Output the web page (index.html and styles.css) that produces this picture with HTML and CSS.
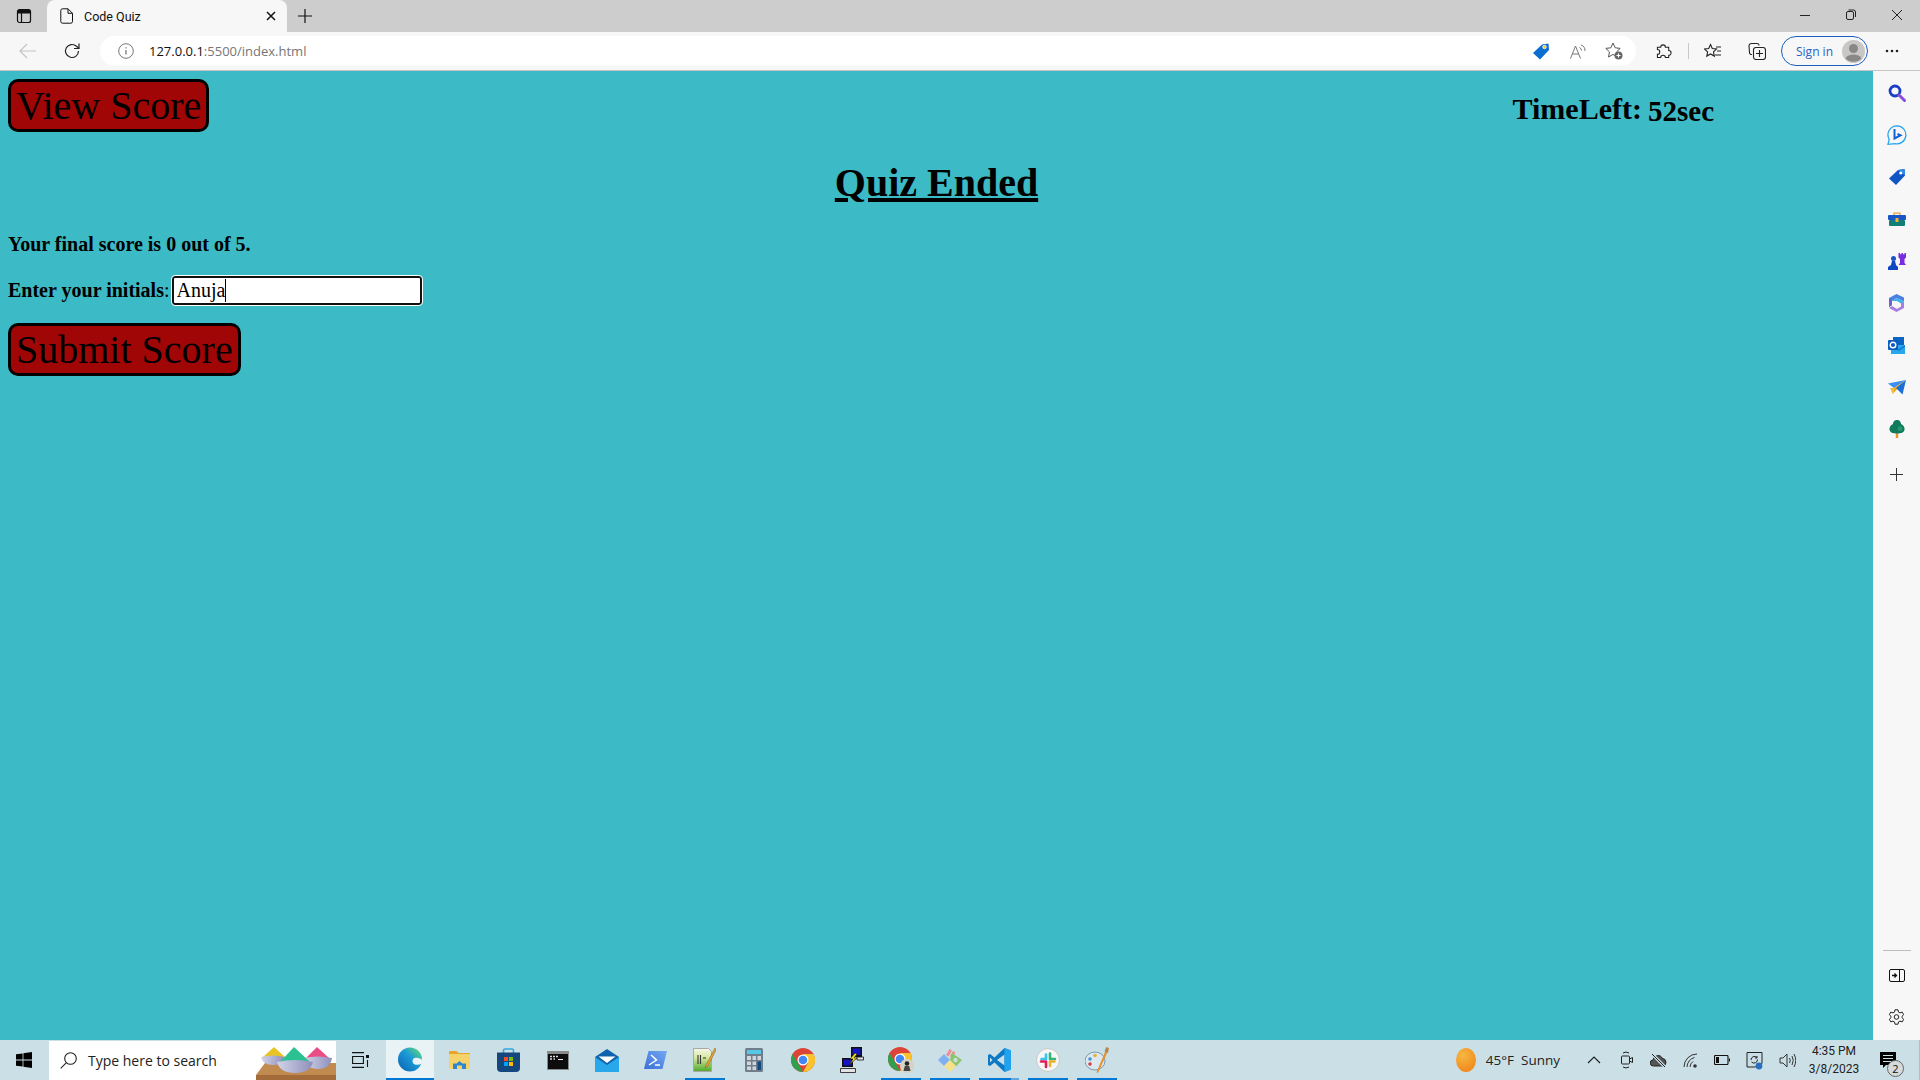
FILE: index.html
```html
<!DOCTYPE html>
<html lang="en">
<head>
  <meta charset="UTF-8">
  <title>Code Quiz</title>
  <link rel="stylesheet" href="styles.css">
</head>
<body>

<!-- tab strip -->
<div class="tabstrip">
  <div class="tab-side">
    <svg width="16" height="16" viewBox="0 0 16 16" fill="none" stroke="#111" stroke-width="1.2"><rect x="1.5" y="1.5" width="13" height="13" rx="2"/><path d="M1.5 5h13M5.5 5v9.5"/><path d="M2 2h12v3H2z" fill="#111" stroke="none"/></svg>
  </div>
  <div class="tab">
    <svg width="14" height="16" viewBox="0 0 14 16" fill="none" stroke="#111" stroke-width="1"><path d="M2.500.8h5.500l4.500 4.500v8.200a1.700 1.700 0 0 1-1.700 1.700H2.500a1.700 1.700 0 0 1-1.700-1.700V2.500A1.700 1.700 0 0 1 2.500.8z"/><path d="M8 .8v4.500h4.500"/></svg>
    <span class="tab-title">Code Quiz</span>
    <svg class="tab-close" width="10" height="10" viewBox="0 0 10 10" stroke="#111" stroke-width="1.500"><path d="M1 1l8 8M9 1l-8 8"/></svg>
  </div>
  <div class="tab-new">
    <svg width="14" height="14" viewBox="0 0 14 14" stroke="#111" stroke-width="1.200"><path d="M7 0v14M0 7h14"/></svg>
  </div>
  <div class="win-btns">
    <svg width="46" height="12" viewBox="0 0 46 12" stroke="#222"><path d="M18 6.500h10"/></svg>
    <svg width="46" height="12" viewBox="0 0 46 12" fill="none" stroke="#222"><rect x="18.500" y="2.500" width="7" height="8" rx="1.500"/><path d="M20.500 1h5a2 2 0 0 1 2 2v5"/></svg>
    <svg width="46" height="12" viewBox="0 0 46 12" stroke="#222"><path d="M18 1l10 10M28 1L18 11"/></svg>
  </div>
</div>

<!-- address bar row -->
<div class="toolbar">
  <svg class="tb-back" width="18" height="16" viewBox="0 0 18 16" fill="none" stroke="#c4c4c4" stroke-width="1.200"><path d="M17 8H1M8 1L1 8l7 7"/></svg>
  <svg class="tb-reload" width="18" height="18" viewBox="0 0 18 18" fill="none" stroke="#222" stroke-width="1.200"><path d="M15.500 9a6.500 6.500 0 1 1-2-4.700L16 6.500"/><path d="M16 1.500v5h-5"/></svg>
  <div class="addressbar">
    <svg width="16" height="16" viewBox="0 0 16 16" fill="none" stroke="#777" stroke-width="1"><circle cx="8" cy="8" r="7.300"/><path d="M8 7v4.500" stroke-width="1.300"/><path d="M8 4.200v1.300" stroke-width="1.300"/></svg>
    <span class="url"><span class="url-host">127.0.0.1</span>:5500/index.html</span>
    <svg class="addr-tag" width="18" height="18" viewBox="0 0 18 18"><path d="M1 11L10 2.500 16.500 1.500 17 8l-9 9.500z" fill="#0b6fd1"/><circle cx="12.500" cy="5" r="1.800" fill="#ffc933" stroke="#fff" stroke-width=".7"/></svg>
    <svg class="addr-read" width="16" height="15" viewBox="0 0 16 15" fill="none" stroke="#777" stroke-width="1"><path d="M.5 14.500L5.500 2l5 12.500M2.300 10h6.400"/><path d="M9.500 3.500a3.500 3.500 0 0 1 2 3M11 1a6 6 0 0 1 4 6"/></svg>
    <svg class="addr-fav" width="20" height="20" viewBox="0 0 20 20"><path d="M9 2l2.200 4.800 5 .6-3.700 3.500 1 5-4.500-2.500L4.500 16l1-5L1.800 7.400l5-.6z" fill="none" stroke="#555" stroke-width="1"/><circle cx="14.500" cy="14.500" r="4" fill="#666"/><path d="M14.500 12.500v4M12.500 14.500h4" stroke="#fff" stroke-width="1"/></svg>
  </div>
  <svg class="tb-ext" width="16" height="16" viewBox="0 0 17 17" fill="none" stroke="#222" stroke-width="1.100"><path d="M1.500 4.500H5a2.500 2.500 0 1 1 5 0h3.500V8a2.500 2.500 0 1 1 0 5v2.500H10a2.500 2.500 0 1 0-5 0H1.500V12a2.500 2.500 0 1 0 0-5z"/></svg>
  <div class="tb-divider"></div>
  <svg class="tb-favs" width="18" height="16" viewBox="0 0 18 16" fill="none" stroke="#222" stroke-width="1.100"><path d="M6.500 1.500l1.800 4 4.200.5-3 2.900.8 4.200-3.800-2.100-3.700 2.100.8-4.200L.5 6l4.200-.5z"/><path d="M12 4h5M13 8h4M11 12h6"/></svg>
  <svg class="tb-coll" width="18" height="18" viewBox="0 0 18 18" fill="none" stroke="#222" stroke-width="1.100"><path d="M4 12.500A2 2 0 0 1 1.500 10.500L1 4a2.500 2.500 0 0 1 2.500-2.500L9 1.500a2 2 0 0 1 2 2"/><rect x="5.500" y="5.500" width="12" height="12" rx="2.500"/><path d="M11.500 8v7M8 11.500h7"/></svg>
  <div class="signin">
    <span>Sign in</span>
    <svg width="23" height="23" viewBox="0 0 23 23"><circle cx="11.500" cy="11.500" r="11.500" fill="#c9c7c5"/><circle cx="11.500" cy="8.500" r="4.500" fill="#8a8886"/><path d="M3.500 18.500c1.500-3 4.500-4 8-4s6.500 1 8 4a11.500 11.500 0 0 1-16 0z" fill="#8a8886"/></svg>
  </div>
  <svg class="tb-more" width="14" height="4" viewBox="0 0 14 4" fill="#222"><circle cx="2" cy="2" r="1.300"/><circle cx="7" cy="2" r="1.300"/><circle cx="12" cy="2" r="1.300"/></svg>
</div>

<div class="window-body">
  <!-- the quiz page -->
  <main class="page">
    <header class="page-head">
      <button class="btn" type="button">View Score</button>
      <div class="timer"><span>TimeLeft:</span> <span class="time-val">52sec</span></div>
    </header>
    <h1 class="quiz-title">Quiz Ended</h1>
    <p class="final-score">Your final score is 0 out of 5.</p>
    <div class="initials-row">
      <label class="initials-label" for="initials"><b>Enter your initials</b>:</label>
      <span class="input-wrap">
        <input id="initials" class="initials-input" type="text" value="Anuja">
        <span class="caret"></span>
      </span>
    </div>
    <button class="btn btn-submit" type="button">Submit Score</button>
  </main>

  <!-- edge sidebar -->
  <aside class="sidebar">
    <div class="side-icon"><svg width="18" height="18" viewBox="0 0 18 18" fill="none"><circle cx="7" cy="7" r="5" stroke="#1a3fc4" stroke-width="2.800"/><path d="M11 11l5.500 5.500" stroke="#8a4be0" stroke-width="3" stroke-linecap="round"/></svg></div>
    <div class="side-icon"><svg width="20" height="20" viewBox="0 0 20 20" fill="none"><path d="M10 .8a9 9 0 1 1-2 17.800L1 19.300l1.200-5A9 9 0 0 1 10 .8z" stroke="#2aa5f0" stroke-width="1.300"/><path d="M7.500 4v9.500l6-3.200-3-1.300" stroke="#1660d8" stroke-width="2"/></svg></div>
    <div class="side-icon"><svg width="18" height="18" viewBox="0 0 18 18"><path d="M1 10.500L10 2l6.500-1 .5 6.500-9 9.500z" fill="#0f55c4"/><path d="M10 2l6.500-1 .5 6.500z" fill="#2d88e6"/><circle cx="12.800" cy="5" r="1.600" fill="#fff"/></svg></div>
    <div class="side-icon"><svg width="18" height="14" viewBox="0 0 18 14"><path d="M6 3V1.200h6V3" fill="none" stroke="#e6a23c" stroke-width="1.300"/><rect y="3" width="18" height="5" rx="1" fill="#1a55c8"/><rect x="1" y="8" width="16" height="6" rx="1" fill="#0f7f78"/><rect x="7.500" y="6" width="3" height="4" fill="#f2b632"/></svg></div>
    <div class="side-icon"><svg width="18" height="18" viewBox="0 0 18 18"><path d="M10.500 1h1.500v1.300h1.500V1H15v1.300h1.500V1H18v4.500l-1.500 1.500v4l1.500 2H10.500l1.500-2V7l-1.500-1.500z" fill="#7a2ce0"/><circle cx="5.500" cy="6.500" r="2.500" fill="#1a55c8"/><path d="M4 9h3l1 4 2 2v3H0v-3l3-2z" fill="#0f48c4"/></svg></div>
    <div class="side-icon"><svg width="17" height="18" viewBox="0 0 17 18"><path d="M8.500 0L16 3.500v4L8.500 4 4 7v4L1 13V4z" fill="#4d7fe0"/><path d="M16 7.500V14l-7.500 4L1 14l3-2 5 3 4-2.500V9z" fill="#a77de0"/><path d="M4 7l4.500-3 7.500 3.500L13 9.500 9 7z" fill="#3ab3e8"/><path d="M1 4v9l3-2V7z" fill="#6f5fd8"/></svg></div>
    <div class="side-icon"><svg width="17" height="17" viewBox="0 0 17 17"><rect x="5" width="11" height="8" fill="#0a64c4"/><path d="M3 8h14v9H3z" fill="#28a8ea"/><path d="M5 8l6 4 6-4v2l-6 4-6-4z" fill="#0f7fd8"/><rect y="3" width="10" height="10" rx="1" fill="#0a5cc0"/><circle cx="5" cy="8" r="2.800" fill="none" stroke="#fff" stroke-width="1.400"/></svg></div>
    <div class="side-icon"><svg width="18" height="15" viewBox="0 0 18 15"><path d="M0 3.500L18 0 6 8z" fill="#3c8ff0"/><path d="M18 0L6 8l-1.500 6z" fill="#f2a516"/><path d="M18 0L8 8l6.500 6.500z" fill="#1a6fd8"/><path d="M2 8l3 6 1-6z" fill="#f0b840"/></svg></div>
    <div class="side-icon"><svg width="16" height="18" viewBox="0 0 16 18"><rect x="6.800" y="13" width="2.400" height="5" fill="#e6952a"/><path d="M8 0c3 0 4 2.500 4 4 2.500 1 4 3.500 3.500 6-.5 2.500-3 3.500-7.500 3.500S1 12.500.5 10C0 7.500 1.500 5 4 4c0-1.500 1-4 4-4z" fill="#107a5c"/><circle cx="11" cy="8.500" r="2.500" fill="#26966e"/></svg></div>
    <div class="side-icon side-plus"><svg width="13" height="13" viewBox="0 0 13 13" stroke="#333" stroke-width="1"><path d="M6.500 0v13M0 6.500h13"/></svg></div>
    <div class="side-bottom">
      <div class="side-sep"></div>
      <div class="side-foot"><svg width="16" height="13" viewBox="0 0 16 13" fill="none" stroke="#111" stroke-width="1"><rect x=".5" y=".5" width="15" height="12" rx="1.500"/><path d="M10.500.5v12"/><path d="M3 6.500h4M5.500 4.500l2 2-2 2" stroke-width="1.300"/></svg></div>
      <div class="side-foot"><svg width="17" height="17" viewBox="0 0 17 17" fill="none" stroke="#222" stroke-width="1"><path d="M7 .8h3l.5 2.300 1.500.8 2.200-.8 1.500 2.600-1.700 1.600v1.400l1.700 1.600-1.500 2.600-2.200-.8-1.500.8-.5 2.300H7l-.5-2.300-1.500-.8-2.200.8L1.300 10.300 3 8.700V7.300L1.300 5.700l1.500-2.600 2.200.8 1.500-.8z"/><circle cx="8.500" cy="8" r="2.300"/></svg></div>
    </div>
  </aside>
</div>

<!-- windows taskbar -->
<footer class="taskbar">
  <div class="start"><svg width="16" height="16" viewBox="0 0 16 16" fill="#000"><path d="M0 2.300L6.600 1.400v6.100H0zM7.400 1.300L16 0v7.500H7.400zM0 8.400h6.600v6.200L0 13.700zM7.400 8.400H16V16l-8.600-1.200z"/></svg></div>
  <div class="searchbox">
    <svg width="17" height="17" viewBox="0 0 17 17" fill="none" stroke="#222" stroke-width="1.100"><circle cx="10.500" cy="6.500" r="5.800"/><path d="M6.200 10.800L.7 16.300"/></svg>
    <span>Type here to search</span>
    <svg class="powder" width="80" height="39" viewBox="0 0 80 39">
      <defs>
        <linearGradient id="bowl" x1="0" y1="0" x2="1" y2="0"><stop offset="0" stop-color="#d2d3e8"/><stop offset="1" stop-color="#8d8fbc"/></linearGradient>
      </defs>
      <path d="M0 34l9-12h71v12z" fill="#c08a50"/>
      <path d="M0 34h80v5H0z" fill="#a26c3a"/>
      <path d="M7 16L18 6l11 10z" fill="#e8c422"/>
      <path d="M5 16q12-3 24 0-2 8-12 8T5 16z" fill="url(#bowl)"/>
      <path d="M50 17L61 6l12 11z" fill="#ea4d86"/>
      <path d="M48 17q14-3 28 0-2 11-14 11T48 17z" fill="url(#bowl)"/>
      <path d="M24 21L38 6l16 15z" fill="#2cc192"/>
      <path d="M21 21q18-4 36 0-3 11-18 11T21 21z" fill="url(#bowl)"/>
    </svg>
  </div>
  <div class="tb-slot"><svg width="17" height="16" viewBox="0 0 17 16" fill="none" stroke="#111" stroke-width="1.100"><path d="M0 .6h12M0 15.400h12"/><path d="M.6 4.500h10.800v7H.6z"/><rect x="14" y="3" width="3" height="3" fill="#111" stroke="none"/><path d="M15.500 8v7"/></svg></div>
  <div class="tb-slot tb-edge">
    <svg width="24" height="25" viewBox="0 0 24 25">
      <defs>
        <linearGradient id="edge" x1="0" y1="1" x2="1" y2="0"><stop offset="0" stop-color="#0d5fb0"/><stop offset=".55" stop-color="#1a9ad6"/><stop offset="1" stop-color="#6fe06a"/></linearGradient>
      </defs>
      <circle cx="12" cy="12.500" r="12" fill="url(#edge)"/>
      <path d="M25 14C23 11 19 10 16.500 11c-2.500 1-2.500 4.500-.5 6 2.500 1.500 6 1 9-1z" fill="#e9f3f6"/>
    </svg>
  </div>
  <div class="tb-slot"><svg width="21" height="18" viewBox="0 0 21 18"><path d="M0 1a1 1 0 0 1 1-1h6.500l2 2H21v3H0z" fill="#e6a526"/><rect y="3" width="21" height="15" rx="1" fill="#f6d36a"/><path d="M4 18v-5.500h3.500L10.500 10l3 2.500H17V18h-4v-3.500H8V18z" fill="#2f86d0"/></svg></div>
  <div class="tb-slot"><svg width="23" height="24" viewBox="0 0 23 24"><path d="M6.500 6V2.500A1.500 1.500 0 0 1 8 1h7a1.500 1.500 0 0 1 1.500 1.500V6" fill="none" stroke="#2fa8e0" stroke-width="1.600"/><path d="M0 4.500h23V20a4 4 0 0 1-4 4H4a4 4 0 0 1-4-4z" fill="#14477e"/><rect x="7" y="9" width="4" height="4" fill="#f25022"/><rect x="12" y="9" width="4" height="4" fill="#7fba00"/><rect x="7" y="14" width="4" height="4" fill="#00a4ef"/><rect x="12" y="14" width="4" height="4" fill="#ffb900"/></svg></div>
  <div class="tb-slot"><svg width="22" height="19" viewBox="0 0 22 19"><rect width="22" height="19" fill="#8a8a8a"/><rect x="1" y="3" width="20" height="15" fill="#0c0c0c"/><path d="M3 5.500h2M6 5.500h2M9 5.500h2M3 8h2M6.500 8h1.500" stroke="#ddd" stroke-width="1.300"/><path d="M11 8.500h5" stroke="#eee"/></svg></div>
  <div class="tb-slot"><svg width="24" height="23" viewBox="0 0 24 23"><path d="M12 0l12 8v15H0V8z" fill="#0f62ad"/><path d="M3.500 7.500h17L12 14z" fill="#fff"/><path d="M0 8l12 8 12-8v15H0z" fill="#28a8ea"/></svg></div>
  <div class="tb-slot"><svg width="23" height="18" viewBox="0 0 23 18"><defs><linearGradient id="pshell" x1="0" y1="1" x2="1" y2="0"><stop offset="0" stop-color="#3a6fd8"/><stop offset="1" stop-color="#73a8f2"/></linearGradient></defs><path d="M4.500 0H23l-4.500 18H0z" fill="url(#pshell)"/><path d="M7 4l5.500 5L5 14M11 14h5" fill="none" stroke="#fff" stroke-width="1.500"/></svg></div>
  <div class="tb-slot tb-open"><svg width="23" height="24" viewBox="0 0 23 24"><defs><linearGradient id="npad" x1="0" y1="0" x2="0" y2="1"><stop offset="0" stop-color="#f6f6e8"/><stop offset=".4" stop-color="#d6e8a0"/><stop offset="1" stop-color="#4fa82c"/></linearGradient></defs><path d="M.5 .5h15l3 3v20H.5z" fill="url(#npad)" stroke="#a8a8a8"/><path d="M5 7v9M7.500 7v9M10 10h3" stroke="#333" stroke-width="1.100"/><path d="M22 0L13 17l-1 3 3-2L23 2z" fill="#e6a23c" stroke="#8a5a16" stroke-width=".5"/></svg></div>
  <div class="tb-slot"><svg width="18" height="24" viewBox="0 0 18 24"><rect width="18" height="24" rx="1.500" fill="#6f7e8c"/><rect x="2" y="2" width="14" height="4" fill="#56c8e6"/><path d="M2 8h4v4H2zM7.500 8h3.500v4H7.500zM12.500 8H16v4h-3.500zM2 13.500h4v3.500H2zM7.500 13.500h3.500v3.500H7.500zM2 18.500h4V22H2zM7.500 18.500h3.500V22H7.500z" fill="#d2d6da"/><rect x="12.500" y="13.500" width="3.500" height="8.500" fill="#15487e"/></svg></div>
  <div class="tb-slot">
    <svg width="24" height="24" viewBox="0 0 24 24"><circle cx="12" cy="12" r="12" fill="#dd4437"/><path d="M12 24a12 12 0 0 0 10.400-18H12l5 9z" fill="#f8c32c"/><path d="M1.600 6l5.300 9 5 9A12 12 0 0 1 1.600 6z" fill="#2fa04c"/><circle cx="12" cy="12" r="5.500" fill="#fff"/><circle cx="12" cy="12" r="4.300" fill="#4285f4"/></svg>
  </div>
  <div class="tb-slot"><svg width="24" height="26" viewBox="0 0 24 26"><rect x="11" y="0" width="11" height="10" fill="#111"/><rect x="12.500" y="1.500" width="8" height="6.500" fill="#1414c8"/><rect x="2" y="11" width="11" height="9" fill="#111"/><rect x="3.500" y="12.500" width="8" height="6" fill="#1414c8"/><path d="M.5 21.500h15v4H.5zM17 10h6.500v3H17z" fill="#e2e2e2" stroke="#111" stroke-width=".8"/><path d="M15 6l-5 6h3l-4 6 8-7h-3l3-4z" fill="#f6e218" stroke="#111" stroke-width=".6"/></svg></div>
  <div class="tb-slot tb-open">
    <svg width="26" height="26" viewBox="0 0 26 26"><circle cx="12" cy="12" r="12" fill="#dd4437"/><path d="M12 24a12 12 0 0 0 10.400-18H12l5 9z" fill="#f8c32c"/><path d="M1.600 6l5.300 9 5 9A12 12 0 0 1 1.600 6z" fill="#2fa04c"/><circle cx="12" cy="12" r="5.500" fill="#fff"/><circle cx="12" cy="12" r="4.300" fill="#4285f4"/><circle cx="19" cy="19" r="7" fill="#d6d2c6"/><circle cx="19" cy="16.500" r="2.300" fill="#222"/><path d="M15.500 24l1.300-5h4.400l1.300 5z" fill="#444"/></svg>
  </div>
  <div class="tb-slot tb-open"><svg width="26" height="24" viewBox="0 0 26 24"><path d="M9 7l3.500-6 2.500 1.500-3.500 6zM13 8l3-5 2.500 1.500-3 5z" fill="#ee8d8d"/><path d="M1 12l6-6 6 6-6 6z" fill="#7fb0f2"/><path d="M14 6l2-.2 9 6.200-6 6.500-6-6z" fill="#8cc66c"/><circle cx="18.500" cy="12" r="2.200" fill="#cbe0e6"/><path d="M7 18l6-6 6 6-6 6z" fill="#f6e08a"/></svg></div>
  <div class="tb-slot tb-open tb-vscode"><svg width="24" height="24" viewBox="0 0 24 24"><path fill-rule="evenodd" d="M17.500 0L7.500 9.500 3 6 1 7v10l2 1 4.500-3.500 10 9.500 6.500-2.500v-19zM17.500 6.500v11L10 12zM3 9.500v5L5.500 12z" fill="#0f78c4"/><path d="M17.500 0L24 2.500v19L17.500 24z" fill="#22a2ec"/></svg></div>
  <div class="tb-slot tb-open"><svg width="24" height="24" viewBox="0 0 24 24"><circle cx="12" cy="12" r="11.500" fill="#f6f6f6" stroke="#c4c8c8" stroke-width="1"/><g stroke-width="2.600" stroke-linecap="round"><path d="M10 6.500v4.500M5.500 11H9" stroke="#36c5f0"/><path d="M14 5.500V11M15.500 11H19" stroke="#2eb67d"/><path d="M14 18v-4.500M18.500 13.500H15" stroke="#ecb22e"/><path d="M10 19v-5.500M8.500 13.500H5" stroke="#e01e5a"/></g></svg></div>
  <div class="tb-slot tb-open"><svg width="24" height="26" viewBox="0 0 24 26"><ellipse cx="10" cy="14" rx="10" ry="9" fill="#dbe8f0" stroke="#7a9ab0"/><circle cx="5" cy="12" r="1.800" fill="#4a90d0"/><circle cx="10" cy="8.500" r="1.800" fill="#e6b030"/><circle cx="5" cy="17" r="1.800" fill="#d84040"/><path d="M20.500 4l2 1L13 26l-1.500-.8z" fill="#e6902a"/><path d="M21 0l3 1-1 5-3.500-1.500z" fill="#b08a5a"/></svg></div>

  <div class="tray">
    <span class="sun"></span>
    <span class="weather">45°F&nbsp; Sunny</span>
    <svg class="tray-chev" width="14" height="8" viewBox="0 0 14 8" fill="none" stroke="#222" stroke-width="1.200"><path d="M1 7l6-6 6 6"/></svg>
    <svg class="tray-ic" width="14" height="18" viewBox="0 0 14 18" fill="none" stroke="#222" stroke-width="1"><rect x="1.500" y="5" width="8" height="8" rx="1"/><path d="M9.500 8l3-1.500v5l-3-1.500M3 2q3-2 6 0M3 16q3 2 6 0"/></svg>
    <svg class="tray-ic" width="17" height="15" viewBox="0 0 17 15"><path d="M3.500 13a3 3 0 0 1-.5-6 5 5 0 0 1 9.500-1.500 3.800 3.800 0 0 1 .5 7.500z" fill="#555" stroke="#222"/><path d="M2 1l13 13" stroke="#cbe0e6" stroke-width="3"/><path d="M2 1l13 13" stroke="#222"/></svg>
    <svg class="tray-ic" width="15" height="15" viewBox="0 0 15 15" fill="none" stroke="#333" stroke-width="1"><path d="M1 14A13 13 0 0 1 14 1M4 14A10 10 0 0 1 11.500 4.500M7 14a7 7 0 0 1 3-5.500"/><circle cx="12" cy="13" r="1.800" fill="#333" stroke="none"/></svg>
    <svg class="tray-ic" width="16" height="10" viewBox="0 0 16 10" fill="none" stroke="#111" stroke-width="1.100"><rect x=".5" y=".5" width="13.500" height="9" rx="1"/><rect x="2" y="2" width="3" height="6" fill="#111" stroke="none"/><path d="M15.500 3.500v3"/></svg>
    <svg class="tray-ic" width="17" height="19" viewBox="0 0 17 19"><path d="M1 1.500h15v11l-7 3.500H1z" fill="none" stroke="#222"/><path d="M5 9a3.500 3.500 0 0 1 6-2.500M11 5v2h-2M11.500 8.500a3.500 3.500 0 0 1-6 2.500" fill="none" stroke="#222"/><circle cx="13" cy="15" r="3.400" fill="#2a6fc0"/></svg>
    <svg class="tray-ic" width="17" height="15" viewBox="0 0 17 15" fill="none" stroke="#333" stroke-width="1"><path d="M1 5h3l4-4v13l-4-4H1z"/><path d="M10.500 5q1.500 2.500 0 5M13 3q2.500 4.500 0 9M15 1q3.500 6.500 0 13"/></svg>
    <div class="clock"><span>4:35 PM</span><span>3/8/2023</span></div>
    <div class="notif">
      <svg width="17" height="17" viewBox="0 0 17 17" fill="#000"><path d="M0 0h16v13H6l-3 3v-3H0z"/><path d="M3 3.500h10M3 6.500h10M3 9.500h10" stroke="#cbe0e6" stroke-width="1"/></svg>
      <span class="notif-count">2</span>
    </div>
  </div>
</footer>

</body>
</html>
```

FILE: styles.css
```css
html, body {
  margin: 0;
  height: 100%;
  overflow: hidden;
}
body {
  display: flex;
  flex-direction: column;
  height: 1080px;
  font-family: "Open Sans", "Noto Sans", sans-serif;
}
svg {
  display: block;
  flex: none;
}

/* tab strip */
.tabstrip {
  display: flex;
  align-items: stretch;
  height: 32px;
  flex: none;
  background: #cdcdcd;
}
.tab-side {
  width: 47px;
  display: flex;
  align-items: center;
  justify-content: center;
}
.tab {
  width: 240px;
  box-sizing: border-box;
  padding: 0 11px 0 13px;
  display: flex;
  align-items: center;
  background: #f7f7f7;
  border-radius: 8px 8px 0 0;
}
.tab-title {
  margin-left: 10px;
  font-family: Roboto, sans-serif;
  font-size: 12.5px;
  color: #111;
  flex: 1;
}
.tab-new {
  width: 36px;
  display: flex;
  align-items: center;
  justify-content: center;
}
.win-btns {
  margin-left: auto;
  display: flex;
  align-items: center;
  padding-bottom: 2px;
}

/* address bar row */
.toolbar {
  display: flex;
  align-items: center;
  height: 38px;
  flex: none;
  background: #f7f7f7;
  border-bottom: 1px solid #c6c6c6;
}
.tb-back { margin-left: 19px; }
.tb-reload { margin-left: 26px; }
.addressbar {
  width: 1536px;
  height: 30px;
  margin-left: 19px;
  box-sizing: border-box;
  padding: 0 12px 0 18px;
  display: flex;
  align-items: center;
  background: #fff;
  border-radius: 15px;
}
.url {
  margin-left: 15px;
  font-size: 13px;
  color: #767676;
  flex: 1;
}
.url-host { color: #111; }
.addr-read { margin-left: 20px; }
.addr-fav { margin-left: 18px; }
.tb-ext { margin-left: 20px; }
.tb-divider {
  width: 1px;
  height: 16px;
  margin-left: 16px;
  background: #c8c8c8;
}
.tb-favs { margin-left: 15px; }
.tb-coll { margin-left: 26px; }
.signin {
  width: 87px;
  height: 30px;
  margin-left: 15px;
  box-sizing: border-box;
  padding: 0 2px 0 14px;
  display: flex;
  align-items: center;
  justify-content: space-between;
  border: 1px solid #1a5fc0;
  border-radius: 15px;
  font-size: 12px;
  color: #2a62c4;
}
.tb-more { margin-left: 17px; }

/* page */
.window-body {
  flex: 1;
  display: flex;
  min-height: 0;
}
.page {
  flex: 1;
  background: #3cbac5;
  font-family: "Liberation Serif", "Times New Roman", serif;
  color: #000;
  padding: 8px 8px 0;
}
.page-head {
  display: flex;
  justify-content: space-between;
  align-items: flex-start;
}
.btn {
  display: block;
  height: 53px;
  padding: 0 5px;
  font-family: inherit;
  font-size: 40px;
  line-height: 47px;
  color: #000;
  background: #a00606;
  border: 3px solid #000;
  border-radius: 10px;
}
.timer {
  display: flex;
  align-items: baseline;
  gap: 6px;
  margin: 13px 151px 0 0;
  font-size: 30px;
  font-weight: bold;
}
.time-val {
  font-size: 29px;
  position: relative;
  top: 2px;
}
.quiz-title {
  margin: 27px 0;
  font-size: 40px;
  text-align: center;
  text-decoration: underline;
}
.final-score {
  margin: 0 0 19px;
  font-size: 20px;
  font-weight: bold;
}
.initials-row {
  display: flex;
  align-items: center;
  font-size: 20px;
}
.initials-label { margin-right: 1px; }
.input-wrap {
  position: relative;
  display: block;
}
.initials-input {
  display: block;
  box-sizing: border-box;
  width: 250px;
  height: 29px;
  margin: 1px;
  padding: 0 3px;
  font-family: inherit;
  font-size: 20px;
  color: #000;
  background: #fff;
  border: 2px solid #111;
  border-radius: 3px;
  outline: 1px solid #fff;
}
.caret {
  position: absolute;
  left: 54px;
  top: 4px;
  width: 1px;
  height: 23px;
  background: #000;
}
.btn-submit { margin-top: 17px; }

/* edge sidebar */
.sidebar {
  width: 47px;
  flex: none;
  display: flex;
  flex-direction: column;
  align-items: center;
  background: #f7f7f7;
  padding-top: 1px;
  padding-bottom: 2px;
}
.side-icon {
  height: 42px;
  width: 100%;
  display: flex;
  align-items: center;
  justify-content: center;
}
.side-plus { margin-top: 3px; }
.side-bottom {
  margin-top: auto;
  width: 100%;
  display: flex;
  flex-direction: column;
  align-items: center;
}
.side-sep {
  width: 28px;
  height: 1px;
  background: #bdbdbd;
  margin-bottom: 3px;
}
.side-foot {
  height: 42px;
  display: flex;
  align-items: center;
  justify-content: center;
}

/* taskbar */
.taskbar {
  height: 40px;
  flex: none;
  display: flex;
  align-items: center;
  background: #cbe0e6;
}
.start {
  width: 49px;
  display: flex;
  justify-content: center;
  padding-right: 1px;
  box-sizing: border-box;
}
.searchbox {
  width: 287px;
  height: 39px;
  margin-top: 1px;
  box-sizing: border-box;
  padding-left: 11px;
  display: flex;
  align-items: center;
  background: #fff;
  font-size: 14px;
  color: #222;
  overflow: hidden;
}
.searchbox span {
  margin-left: 11px;
  flex: 1;
  white-space: nowrap;
}
.tb-slot {
  width: 49px;
  height: 40px;
  flex: none;
  box-sizing: border-box;
  display: flex;
  align-items: center;
  justify-content: center;
}
.tb-edge {
  width: 48px;
  margin: 0 1px;
  padding-top: 1px;
  background: #e9f3f6;
  border-bottom: 2px solid #0078d4;
}
.tb-open {
  background: linear-gradient(#0078d4, #0078d4) center bottom / 40px 2px no-repeat;
}
.tb-vscode {
  background: linear-gradient(90deg, #0078d4 32px, #5fa8e0 32px) center bottom / 40px 2px no-repeat;
}
.tray {
  margin-left: auto;
  display: flex;
  align-items: center;
  height: 100%;
  padding-right: 5px;
  border-right: 1px solid #a9c0c7;
}
.sun {
  width: 20px;
  height: 24px;
  border-radius: 50%;
  background: radial-gradient(circle at 35% 30%, #f6b740, #ef7d14);
}
.weather {
  margin-left: 10px;
  font-size: 13.5px;
  color: #222;
  white-space: pre;
}
.tray-chev { margin: 0 19px 0 27px; }
.tray-ic { margin-right: 16px; }
.clock {
  width: 68px;
  margin-left: -12px;
  display: flex;
  flex-direction: column;
  align-items: center;
  gap: 2px;
  font-family: Roboto, sans-serif;
  font-size: 12px;
  line-height: 16px;
  color: #222;
}
.notif {
  position: relative;
  margin: 0 17px 0 12px;
}
.notif-count {
  position: absolute;
  left: 7px;
  top: 8px;
  width: 15px;
  height: 15px;
  border: 1px solid #666;
  border-radius: 50%;
  background: #d7dadb;
  font-size: 11px;
  line-height: 15px;
  text-align: center;
  color: #111;
}
```
